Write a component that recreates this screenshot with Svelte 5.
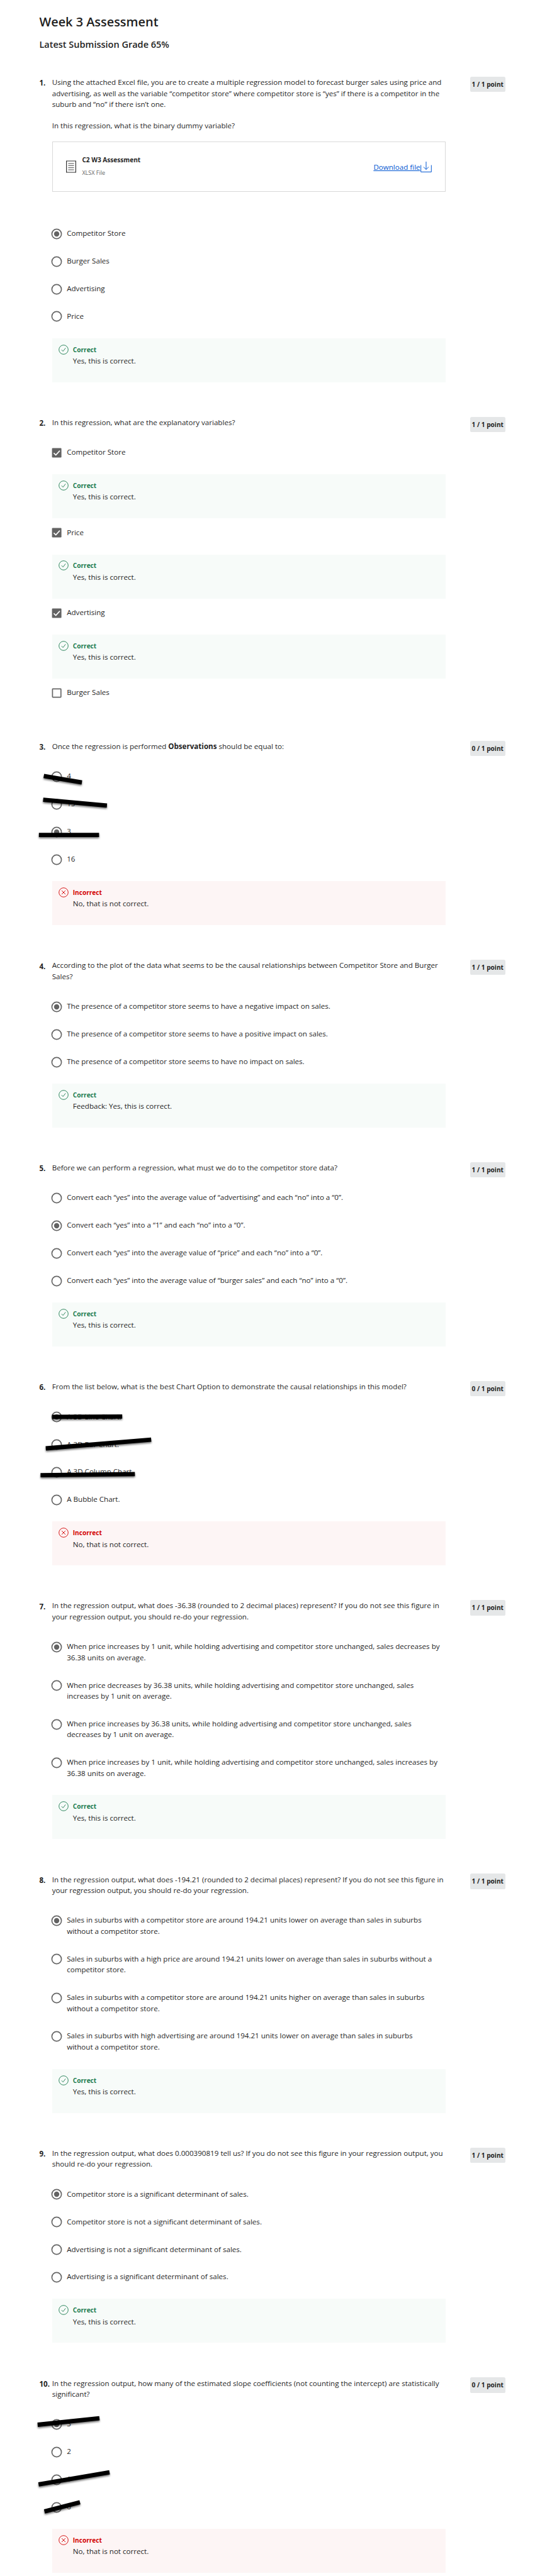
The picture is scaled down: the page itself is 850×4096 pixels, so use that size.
<script>
  const yes = { ok: true, text: 'Yes, this is correct.' };
  const no = { ok: false, text: 'No, that is not correct.' };

  // strike: [x1, y1, x2, y2], measured from the option's left edge and the control's centre
  const questions = [
    {
      points: 1,
      text: 'Using the attached Excel file, you are to create a multiple regression model to forecast burger sales using price and<br>advertising, as well as the variable “competitor store” where competitor store is “yes” if there is a competitor in the<br>suburb and “no” if there isn’t one.',
      more: 'In this regression, what is the binary dummy variable?',
      file: { name: 'C2 W3 Assessment', kind: 'XLSX File' },
      options: [{ t: 'Competitor Store', on: true }, { t: 'Burger Sales' }, { t: 'Advertising' }, { t: 'Price' }],
      result: yes
    },
    {
      points: 1,
      box: true,
      text: 'In this regression, what are the explanatory variables?',
      options: [
        { t: 'Competitor Store', on: true, result: yes },
        { t: 'Price', on: true, result: yes },
        { t: 'Advertising', on: true, result: yes },
        { t: 'Burger Sales' }
      ]
    },
    {
      points: 0,
      text: 'Once the regression is performed <b>Observations</b> should be equal to:',
      options: [
        { t: '4', strike: [-13.4, -1.1, 47.1, 9.1] },
        { t: '15', strike: [-14.4, -7.3, 86.9, 1.8] },
        { t: '3', on: true, strike: [-21.2, 4.6, 74.4, 4.6] },
        { t: '16' }
      ],
      result: no
    },
    {
      points: 1,
      text: 'According to the plot of the data what seems to be the causal relationships between Competitor Store and Burger<br>Sales?',
      options: [
        { t: 'The presence of a competitor store seems to have a negative impact on sales.', on: true },
        { t: 'The presence of a competitor store seems to have a positive impact on sales.' },
        { t: 'The presence of a competitor store seems to have no impact on sales.' }
      ],
      result: { ok: true, text: 'Feedback: Yes, this is correct.' }
    },
    {
      points: 1,
      text: 'Before we can perform a regression, what must we do to the competitor store data?',
      options: [
        { t: 'Convert each “yes” into the average value of “advertising” and each “no” into a “0”.' },
        { t: 'Convert each “yes” into a “1” and each “no” into a “0”.', on: true },
        { t: 'Convert each “yes” into the average value of “price” and each “no” into a “0”.' },
        { t: 'Convert each “yes” into the average value of “burger sales” and each “no” into a “0”.' }
      ],
      result: yes
    },
    {
      points: 0,
      text: 'From the list below, what is the best Chart Option to demonstrate the causal relationships in this model?',
      options: [
        { t: 'A 3D Line Chart.', on: true, strike: [0, -0.1, 111.2, -0.6] },
        { t: 'A 3D Bar Chart.', strike: [-10.3, 6, 157.2, -7.9] },
        { t: 'A 3D Column Chart.', strike: [-18.6, 4.7, 131.3, 2.9] },
        { t: 'A Bubble Chart.' }
      ],
      result: no
    },
    {
      points: 1,
      text: 'In the regression output, what does -36.38 (rounded to 2 decimal places) represent? If you do not see this figure in<br>your regression output, you should re-do your regression.',
      options: [
        { t: 'When price increases by 1 unit, while holding advertising and competitor store unchanged, sales decreases by<br>36.38 units on average.', on: true },
        { t: 'When price decreases by 36.38 units, while holding advertising and competitor store unchanged, sales<br>increases by 1 unit on average.' },
        { t: 'When price increases by 36.38 units, while holding advertising and competitor store unchanged, sales<br>decreases by 1 unit on average.' },
        { t: 'When price increases by 1 unit, while holding advertising and competitor store unchanged, sales increases by<br>36.38 units on average.' }
      ],
      result: yes
    },
    {
      points: 1,
      text: 'In the regression output, what does -194.21 (rounded to 2 decimal places) represent? If you do not see this figure in<br>your regression output, you should re-do your regression.',
      options: [
        { t: 'Sales in suburbs with a competitor store are around 194.21 units lower on average than sales in suburbs<br>without a competitor store.', on: true },
        { t: 'Sales in suburbs with a high price are around 194.21 units lower on average than sales in suburbs without a<br>competitor store.' },
        { t: 'Sales in suburbs with a competitor store are around 194.21 units higher on average than sales in suburbs<br>without a competitor store.' },
        { t: 'Sales in suburbs with high advertising are around 194.21 units lower on average than sales in suburbs<br>without a competitor store.' }
      ],
      result: yes
    },
    {
      points: 1,
      text: 'In the regression output, what does 0.000390819 tell us? If you do not see this figure in your regression output, you<br>should re-do your regression.',
      options: [
        { t: 'Competitor store is a significant determinant of sales.', on: true },
        { t: 'Competitor store is not a significant determinant of sales.' },
        { t: 'Advertising is not a significant determinant of sales.' },
        { t: 'Advertising is a significant determinant of sales.' }
      ],
      result: yes
    },
    {
      points: 0,
      text: 'In the regression output, how many of the estimated slope coefficients (not counting the intercept) are statistically<br>significant?',
      options: [
        { t: '3', on: true, strike: [-23.2, 0.5, 75, -9.9] },
        { t: '2' },
        { t: '1', strike: [-21.7, 7.3, 91, -11.8] },
        { t: '0', strike: [-12.4, 6.4, 44, -8.3] }
      ],
      result: no
    }
  ];
</script>

{#snippet feedback(r)}
  <div class="feedback" class:bad={!r.ok}>
    <svg class="mark" viewBox="0 0 16 16" width="16" height="16">
      <circle cx="8" cy="8" r="7.3" />
      {#if r.ok}
        <path d="M4.8 8.2 L7.1 10.6 L11.2 5.4" />
      {:else}
        <path d="M5 5 L11 11 M11 5 L5 11" />
      {/if}
    </svg>
    <div>
      <strong>{r.ok ? 'Correct' : 'Incorrect'}</strong>
      <p>{r.text}</p>
    </div>
  </div>
{/snippet}

<main>
  <h1>Week 3 Assessment</h1>
  <h2>Latest Submission Grade 65%</h2>

  {#each questions as q, i}
    <section>
      <span class="number">{i + 1}.</span>
      <div class="body">
        <p class="prompt">{@html q.text}</p>
        {#if q.more}<p class="more">{q.more}</p>{/if}
        {#if q.file}
          <div class="file">
            <svg class="doc" viewBox="0 0 16 20" width="16" height="20">
              <path d="M.6 1H15.4V19H.6Z" />
              <path class="thin" d="M3.4 5H12.6M3.4 8.3H12.6M3.4 11.7H12.6M3.4 15H12.6" />
            </svg>
            <div class="meta">
              <strong>{q.file.name}</strong>
              <span>{q.file.kind}</span>
            </div>
            <a href="#download">Download file</a>
            <svg class="get" viewBox="0 0 18 18" width="18" height="18">
              <path d="M.7 5.5V16.4H17.3V5.5M9 0V12.4M4.9 8.4L9 12.5L13.1 8.4" />
            </svg>
          </div>
        {/if}
        <div class="options">
          {#each q.options as o}
            <div class="option">
              <svg class="control" viewBox="0 0 18 18" width="18" height="18">
                {#if q.box}
                  {#if o.on}
                    <rect class="fill" x="1.6" y="1.6" width="15" height="14.8" rx="1.2" />
                    <path class="tick" d="M4.4 9.4L7.7 12.6L14 5.6" />
                  {:else}
                    <rect class="ring" x="2.4" y="2.4" width="13.4" height="13.2" rx=".6" />
                  {/if}
                {:else}
                  <circle class="ring" cx="9" cy="9" r="7.6" />
                  {#if o.on}<circle class="fill" cx="9" cy="9" r="4.2" />{/if}
                {/if}
              </svg>
              <span class="label">{@html o.t}</span>
              {#if o.strike}
                <svg class="strike" width="1" height="1">
                  <line x1={o.strike[0]} y1={o.strike[1]} x2={o.strike[2]} y2={o.strike[3]} />
                </svg>
              {/if}
            </div>
            {#if o.result}{@render feedback(o.result)}{/if}
          {/each}
        </div>
        {#if q.result}{@render feedback(q.result)}{/if}
      </div>
      <span class="badge">{q.points} / 1 point</span>
    </section>
  {/each}
</main>

<style>
  :global(body) {
    margin: 0;
    background: #fff;
  }
  main {
    box-sizing: border-box;
    width: 850px;
    height: 4096px;
    overflow: hidden;
    padding: 20.3px 46px 0 62.4px;
    font: 11.6px/17.4px 'Open Sans', sans-serif;
    color: #1f1f1f;
  }
  h1,
  h2,
  p {
    margin: 0;
  }
  h1 {
    font-size: 19.9px;
    line-height: 29px;
    font-weight: 600;
  }
  h2 {
    margin-top: 12px;
    height: 60.5px;
    font-size: 14.5px;
    line-height: 20px;
    font-weight: 600;
  }
  section {
    display: flex;
    align-items: flex-start;
    margin-bottom: 41.4px;
  }
  .number {
    width: 20.3px;
    flex: none;
    padding-top: 1.6px;
    font-weight: 700;
    white-space: nowrap;
  }
  .body {
    width: 625.2px;
    flex: none;
    padding-top: 0.3px;
  }
  .prompt,
  .label {
    white-space: nowrap;
  }
  .more {
    margin-top: 16.5px;
  }
  .badge {
    flex: none;
    box-sizing: border-box;
    width: 56.4px;
    height: 24.4px;
    margin-left: 38.7px;
    border-radius: 2.6px;
    background: #e5e7e8;
    font-size: 10.1px;
    line-height: 25px;
    font-weight: 700;
    text-align: center;
    white-space: nowrap;
  }
  .file {
    box-sizing: border-box;
    display: flex;
    align-items: center;
    height: 80.3px;
    margin: 16.4px 0 27.1px;
    padding: 0 20.7px 0 21.5px;
    border: 1px solid #d9d9d9;
  }
  .doc {
    fill: none;
    stroke: #333;
    stroke-width: 1.2;
  }
  .thin {
    stroke-width: 0.9;
  }
  .meta {
    display: flex;
    flex-direction: column;
    gap: 2.6px;
    margin-left: 9.2px;
    flex: 1;
    font-size: 10.1px;
  }
  .meta span {
    font-size: 9px;
    color: #666;
  }
  a {
    margin: 2px 0.6px 0 0;
    color: #0056d2;
    text-decoration: underline;
  }
  .get {
    margin-top: 1.8px;
    fill: none;
    stroke: #0056d2;
    stroke-width: 1;
  }
  .options {
    padding-top: 30px;
  }
  .option {
    position: relative;
    display: flex;
    align-items: flex-start;
    margin-bottom: 26.5px;
  }
  .control {
    flex: none;
    margin: 0.7px 7.2px -2px -1.7px;
  }
  .ring {
    fill: none;
    stroke: #666;
    stroke-width: 1.7;
  }
  .fill {
    fill: #636363;
  }
  .tick {
    fill: none;
    stroke: #fff;
    stroke-width: 1.6;
  }
  .strike {
    position: absolute;
    left: 0;
    top: 9.7px;
    overflow: visible;
    filter: drop-shadow(0 2.4px 1.6px rgba(0, 0, 0, 0.55));
  }
  .strike line {
    stroke: #000;
    stroke-width: 6.8;
  }
  .feedback {
    box-sizing: border-box;
    display: flex;
    align-items: flex-start;
    height: 70px;
    margin-bottom: 13.5px;
    padding: 9.9px 10px 0;
    background: #f7fbf9;
  }
  .feedback.bad {
    background: #fdf5f5;
  }
  .mark {
    flex: none;
    margin-right: 7.1px;
    fill: none;
    stroke: #1d7c50;
    stroke-width: 0.9;
  }
  .bad .mark {
    stroke: #d30001;
  }
  .feedback strong {
    display: block;
    font-size: 10.1px;
    color: #1d7c50;
  }
  .feedback.bad strong {
    color: #d30001;
  }
</style>
